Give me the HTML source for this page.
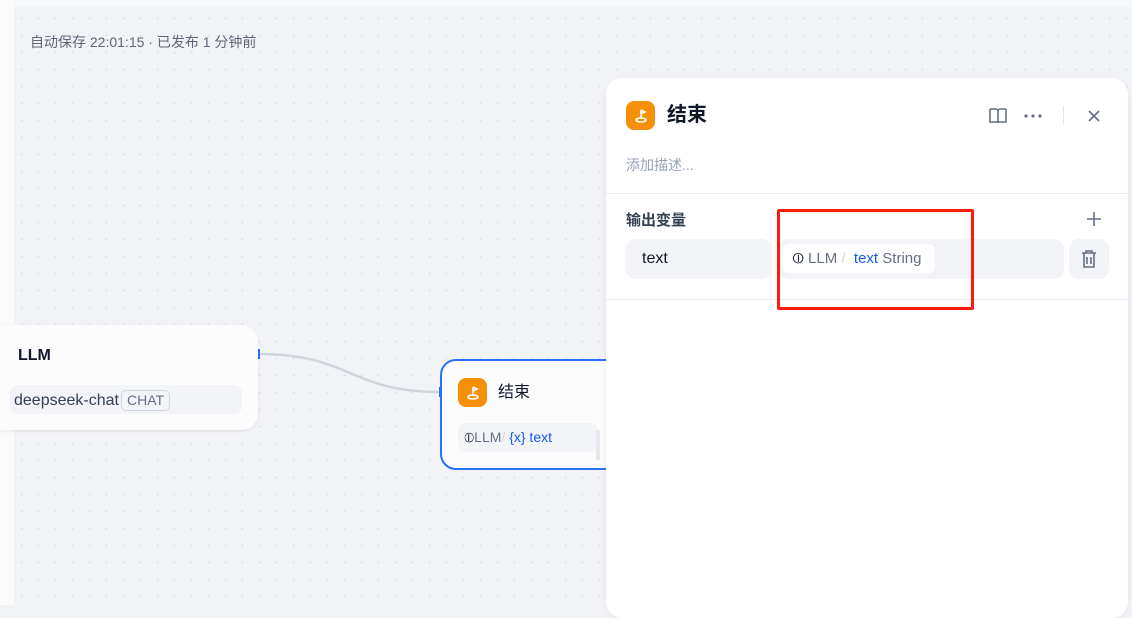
<!DOCTYPE html>
<html><head><meta charset="utf-8"><style>
*{box-sizing:border-box;margin:0;padding:0}
body{width:1132px;height:605px;overflow:hidden;position:relative;font-family:"Liberation Sans","Noto Sans CJK SC",sans-serif;background:#f2f3f7}
.canvas{position:absolute;left:14px;top:7px;right:0;bottom:0;background-color:#f2f3f7;background-image:radial-gradient(circle,#dcdfe5 0.9px,transparent 1.1px);background-size:17px 17px;background-position:-1px 3px}
.topbar{position:absolute;left:0;top:0;right:0;height:7px;background:#f7f8fa}
.leftbar{position:absolute;left:0;top:0;width:14px;bottom:0;background:#fbfbfc}
.status{position:absolute;left:30px;top:32px;font-size:14px;color:#5e6675}
.llm{position:absolute;left:-20px;top:325px;width:278px;height:105px;background:#fcfcfd;border-radius:16px;box-shadow:0 1px 3px rgba(16,24,40,.08)}
.llm .t{position:absolute;left:38px;top:22px;font-weight:bold;font-size:16px;color:#101828}
.llm .m{position:absolute;left:30px;top:60px;width:232px;height:29px;background:#f2f4f7;border-radius:8px;font-size:16px;color:#354052;padding:5px 0 0 4px}
.tag{display:inline-block;border:1px solid #d0d5dd;border-radius:5px;font-size:14px;color:#676f83;padding:0 5px;line-height:19px;margin-left:2px}
.end{position:absolute;left:440px;top:359px;width:190px;height:111px;background:#fcfcfd;border:2px solid #2970ff;border-radius:16px}
.ic{position:absolute;width:29px;height:29px;border-radius:8px;background:#f79009;display:flex;align-items:center;justify-content:center}
.end .ic{left:16px;top:17px}
.end .t{position:absolute;left:56px;top:22px;font-size:16px;color:#101828;line-height:20px}
.end .v{position:absolute;left:16px;top:62px;width:140px;height:29px;background:#f2f4f7;border-radius:8px;font-size:14px;color:#676f83;padding:6px 0 0 6px}
.blue{color:#155aef}
.panel{position:absolute;left:606px;top:78px;width:522px;height:540px;background:#fff;border-radius:16px;box-shadow:0 2px 6px rgba(16,24,40,.06)}
.panel .ic{left:20px;top:23px}
.panel .t{position:absolute;left:61px;top:25px;font-size:20px;font-weight:bold;color:#101828;line-height:24px}
.desc{position:absolute;left:20px;top:77px;font-size:14px;color:#98a2b3}
.hr{position:absolute;left:0;right:0;height:1px;background:#eaecf0}
.sec{position:absolute;left:20px;top:131px;font-size:15px;font-weight:bold;color:#354052}
.row{position:absolute;top:161px;height:40px;background:#f2f4f7;border-radius:10px}
.chip{position:absolute;left:5px;top:5px;height:29px;width:152px;background:#fff;border-radius:6px;font-size:15px;color:#676f83;padding:6px 0 0 10px;line-height:18px}
.red{position:absolute;left:777px;top:209px;width:197px;height:101px;border:3px solid #ff1a0f;border-radius:2px}
</style></head><body>
<div class="topbar"></div><div class="canvas"></div><div class="leftbar"></div>
<div class="status">自动保存 22:01:15 · 已发布 1 分钟前</div>
<svg style="position:absolute;left:0;top:0" width="1132" height="605"><path d="M259 354 C350 354,350 392,440 392" stroke="#d0d5dd" stroke-width="2.5" fill="none"/><rect x="258" y="349" width="2" height="10" fill="#2970ff"/><rect x="439" y="387" width="2" height="10" fill="#2970ff"/></svg>
<div class="llm"><div class="t">LLM</div><div class="m">deepseek-chat<span class="tag">CHAT</span></div></div>
<div class="end"><div class="ic"><svg width="18" height="18" viewBox="0 0 18 18" fill="none" stroke="#fff" stroke-width="1.6"><path d="M9 3v9M9 3l4 2-4 2"/><ellipse cx="9" cy="13" rx="5" ry="2"/></svg></div><div class="t">结束</div>
<div class="v"><span style="color:#101828">⦶</span>LLM<span style="color:#d0d5dd">/</span> <span class="blue">{x} text</span></div>
<div style="position:absolute;left:154px;top:69px;width:4px;height:30px;background:#e4e7ec;border-radius:2px"></div></div>
<div class="panel">
<div class="ic"><svg width="18" height="18" viewBox="0 0 18 18" fill="none" stroke="#fff" stroke-width="1.6"><path d="M9 3v9M9 3l4 2-4 2"/><ellipse cx="9" cy="13" rx="5" ry="2"/></svg></div>
<div class="t">结束</div>
<svg style="position:absolute;left:382px;top:29px" width="20" height="18" viewBox="0 0 20 18" fill="none" stroke="#676f83" stroke-width="1.6"><path d="M2 2h6a2 2 0 0 1 2 2v12M18 2h-6a2 2 0 0 0-2 2M2 2v13h8M18 2v13h-8"/></svg>
<svg style="position:absolute;left:417px;top:35px" width="20" height="6"><circle cx="3" cy="3" r="1.6" fill="#676f83"/><circle cx="10" cy="3" r="1.6" fill="#676f83"/><circle cx="17" cy="3" r="1.6" fill="#676f83"/></svg>
<div style="position:absolute;left:457px;top:28px;width:1px;height:18px;background:#e4e7ec"></div>
<svg style="position:absolute;left:482px;top:32px" width="12" height="12" stroke="#676f83" stroke-width="1.7"><path d="M1 1l10 10M11 1L1 11"/></svg>
<div class="desc">添加描述...</div>
<div class="hr" style="top:115px"></div>
<div class="sec">输出变量</div>
<svg style="position:absolute;left:481px;top:134px" width="14" height="14" stroke="#676f83" stroke-width="1.6"><path d="M7 0v14M0 7h14"/></svg>
<div class="row" style="left:20px;width:146px;font-size:16px;color:#101828;padding:11px 0 0 16px;line-height:18px">text</div>
<div class="row" style="left:172px;width:286px"><div class="chip"><span style="color:#101828">⦶</span> LLM <span style="color:#d0d5dd">/</span>&nbsp; <span class="blue">text</span> String</div></div>
<div class="row" style="left:463px;width:40px"><svg style="position:absolute;left:11px;top:10px" width="18" height="20" viewBox="0 0 18 20" fill="none" stroke="#676f83" stroke-width="1.6"><path d="M2 4h14M6 4V2h6v2M4 4v14h10V4M7 8v7M11 8v7"/></svg></div>
<div class="hr" style="top:221px"></div>
</div>
<div class="red"></div>
</body></html>
